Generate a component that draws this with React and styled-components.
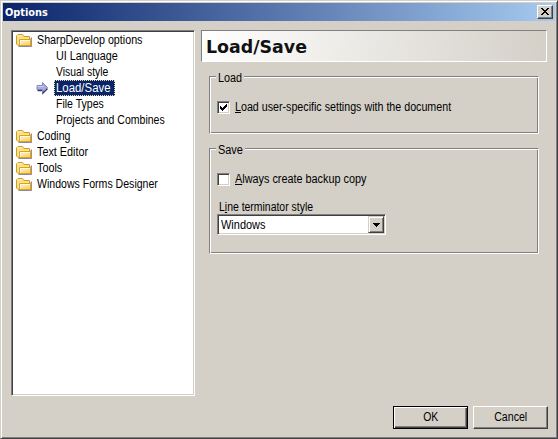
import React from "react";
import styled, { createGlobalStyle, css } from "styled-components";

const face = "#d4d0c8";
const shadow = "#808080";
const dark = "#404040";

const GlobalStyle = createGlobalStyle`
  *, *::before, *::after { box-sizing: border-box; }
  body { margin: 0; overflow: hidden; background: ${face}; }
  button { appearance: none; margin: 0; padding: 0; border-radius: 0; }
`;

const sunken = css`
  border: 1px solid;
  border-color: ${shadow} #fff #fff ${shadow};
  box-shadow: inset 1px 1px 0 ${dark}, inset -1px -1px 0 ${face};
`;

const raised = css`
  background: ${face};
  border: 1px solid;
  border-color: #fff ${dark} ${dark} #fff;
  box-shadow: inset -1px -1px 0 ${shadow};
`;

const Window = styled.main`
  width: 558px;
  height: 439px;
  padding: 2px 2px 1px 2px;
  background: ${face};
  border: 1px solid;
  border-color: ${face} ${dark} ${dark} ${face};
  box-shadow: inset 1px 1px 0 #fff, inset -1px -1px 0 ${shadow};
  font: 12px/16px "Liberation Sans", Arial, sans-serif;
  color: #000;
  display: flex;
  flex-direction: column;
`;

const TitleBar = styled.header`
  height: 18px;
  flex: none;
  display: flex;
  align-items: center;
  justify-content: space-between;
  padding: 0 2px;
  color: #fff;
  background: linear-gradient(90deg, #0a246a, #a6caf0);
  font: bold 11px/16px "DejaVu Sans", Verdana, sans-serif;
`;

const Title = styled.div`
  padding-top: 2px;
`;

const CloseButton = styled.button`
  ${raised}
  width: 16px;
  height: 14px;
  display: flex;
  align-items: center;
  justify-content: center;
  padding: 0 1px 1px 0;
`;

const Text = styled.span`
  display: inline-block;
  white-space: pre;
  transform: scaleX(${(p) => p.$fit || 0.88});
  transform-origin: ${(p) => p.$origin || "left"} center;
`;

const Body = styled.div`
  display: flex;
  gap: 6px;
  padding: 9px 0 0 8px;
`;

const Tree = styled.ul`
  ${sunken}
  list-style: none;
  margin: 0;
  padding: 1px;
  width: 184px;
  height: 366px;
  background: #fff;
`;

const TreeRow = styled.li`
  height: 16px;
  display: flex;
  padding-left: ${(p) => (p.$child ? 23 : 3)}px;
`;

const IconSlot = styled.span`
  width: ${(p) => (p.$child ? 18 : 19)}px;
  height: 16px;
  flex: none;
  display: flex;
`;

const RowLabel = styled.span`
  height: 16px;
  padding-left: 2px;
  white-space: nowrap;
  ${(p) =>
    p.$selected &&
    css`
      width: 61px;
      color: #fff;
      background: #0a246a;
      outline: 1px dotted #f5db95;
      outline-offset: -1px;
    `}
`;

const Panel = styled.section`
  width: 346px;
`;

const Heading = styled.h1`
  margin: 0 0 14px;
  height: 32px;
  padding: 0 0 0 4px;
  border: 1px solid;
  border-color: ${shadow} #fff #fff ${shadow};
  background: linear-gradient(97deg, #fff, ${face});
  font: bold 18.5px/32px "DejaVu Sans", Verdana, sans-serif;
  color: #111;
`;

const Group = styled.section`
  width: 330px;
  height: ${(p) => p.$height}px;
  margin: 0 0 14px 8px;
  border: 1px solid;
  border-color: ${shadow} #fff #fff ${shadow};
  box-shadow: inset 1px 1px 0 #fff, inset -1px -1px 0 ${shadow};
  display: flex;
  flex-direction: column;
`;

const GroupTitle = styled.div`
  height: 16px;
  width: ${(p) => p.$width}px;
  margin: -7px 0 0 6px;
  padding-left: 2px;
  background: ${face};
`;

const CheckRow = styled.label`
  display: flex;
  align-items: center;
  gap: 5px;
  height: 16px;
  margin: ${(p) => p.$top}px 0 0 7px;
  white-space: nowrap;
`;

const CheckBox = styled.span`
  ${sunken}
  width: 13px;
  height: 13px;
  flex: none;
  display: flex;
  background: #fff;
  padding: 2px;
`;

const FieldLabel = styled.div`
  margin: 12px 0 0 9px;
  height: 15px;
`;

const Select = styled.div`
  ${sunken}
  width: 169px;
  height: 21px;
  margin-left: 7px;
  padding: 1px;
  background: #fff;
  display: flex;
  justify-content: space-between;
`;

const SelectValue = styled.span`
  padding: 1px 0 0 2px;
`;

const DropButton = styled.button`
  background: ${face};
  border: 1px solid;
  border-color: ${face} ${dark} ${dark} ${face};
  box-shadow: inset 1px 1px 0 #fff, inset -1px -1px 0 ${shadow};
  width: 16px;
  height: 17px;
  display: flex;
  align-items: center;
  justify-content: center;
`;

const Footer = styled.footer`
  display: flex;
  justify-content: flex-end;
  gap: 5px;
  padding: 10px 7px 0 0;
`;

const PushButton = styled.button`
  width: 75px;
  height: 23px;
  font: inherit;
  color: #000;
  ${raised}
  padding-bottom: 1px;
  ${(p) =>
    p.$primary &&
    css`
      border-color: #000;
      box-shadow: inset 1px 1px 0 #fff, inset -1px -1px 0 ${dark}, inset -2px -2px 0 ${shadow};
    `}
`;

const Key = styled.u`
  text-decoration: underline;
  text-decoration-thickness: 1px;
  text-underline-offset: 1px;
  text-decoration-skip-ink: none;
`;

const FolderIcon = () => (
  <svg width="16" height="16" viewBox="0 0 16 16">
    <defs>
      <linearGradient id="folderFront" x1="0" y1="0" x2="0.5" y2="1">
        <stop offset="0" stopColor="#fff9cf" />
        <stop offset="1" stopColor="#f7d260" />
      </linearGradient>
    </defs>
    <path d="M2.5 14.5h13v-9" fill="none" stroke="#8c8aa0" />
    <path d="M.5 12V4L2 2.5h4.5L8 4.5h5.5V7H15v6.500H2z" fill="#fae08a" stroke="#cf9a2c" />
    <path d="M1.500 5V4l1-.5h3.500" fill="none" stroke="#fff0ad" />
    <path d="M3.500 13.500V7.500H14.500v6z" fill="url(#folderFront)" stroke="#d9a32f" />
    <path d="M4.500 12.500V8.500H14" fill="none" stroke="#fffbd7" />
  </svg>
);

const ArrowIcon = () => (
  <svg width="12" height="16" viewBox="-0.5 0 12 16">
    <path d="M1 10.500h5.500v2.500L11 8.500" fill="none" stroke="#333867" strokeWidth="1.500" />
    <path d="M.5 5.500H6V2.500L11 7.500 6 12V9.500H.5z" fill="#a7acdc" stroke="#8286bd" />
    <path d="M1 6.500h6" stroke="#ced2f1" />
  </svg>
);

const CloseIcon = () => (
  <svg width="8" height="7" viewBox="0 0 8 7" shapeRendering="crispEdges">
    <path
      d="M0 0h2v1H0zM6 0h2v1H6zM1 1h2v1H1zM5 1h2v1H5zM2 2h4v1H2zM3 3h2v1H3zM2 4h4v1H2zM1 5h2v1H1zM5 5h2v1H5zM0 6h2v1H0zM6 6h2v1H6z"
      fill="#000"
    />
  </svg>
);

const CheckIcon = () => (
  <svg width="7" height="7" viewBox="0 0 7 7" shapeRendering="crispEdges">
    <path d="M0 2h1v3H0zM1 3h1v3H1zM2 4h1v3H2zM3 3h1v3H3zM4 2h1v3H4zM5 1h1v3H5zM6 0h1v3H6z" fill="#000" />
  </svg>
);

const DropIcon = () => (
  <svg width="7" height="4" viewBox="0 0 7 4" shapeRendering="crispEdges">
    <path d="M0 0h7v1H0zM1 1h5v1H1zM2 2h3v1H2zM3 3h1v1H3z" fill="#000" />
  </svg>
);

const rows = [
  { label: "SharpDevelop options", fit: 0.893 },
  { label: "UI Language", fit: 0.9, child: true },
  { label: "Visual style", fit: 0.865, child: true },
  { label: "Load/Save", fit: 0.95, child: true, selected: true },
  { label: "File Types", fit: 0.877, child: true },
  { label: "Projects and Combines", fit: 0.876, child: true },
  { label: "Coding", fit: 0.878 },
  { label: "Text Editor", fit: 0.9 },
  { label: "Tools", fit: 0.9 },
  { label: "Windows Forms Designer", fit: 0.88 },
];

export default function App() {
  return (
    <>
      <GlobalStyle />
      <Window>
        <TitleBar>
          <Title>
            <Text $fit={0.89}>Options</Text>
          </Title>
          <CloseButton aria-label="Close">
            <CloseIcon />
          </CloseButton>
        </TitleBar>
        <Body>
          <Tree>
            {rows.map((row) => (
              <TreeRow key={row.label} $child={row.child}>
                <IconSlot $child={row.child}>
                  {!row.child && <FolderIcon />}
                  {row.selected && <ArrowIcon />}
                </IconSlot>
                <RowLabel $selected={row.selected}>
                  <Text $fit={row.fit}>{row.label}</Text>
                </RowLabel>
              </TreeRow>
            ))}
          </Tree>
          <Panel>
            <Heading>
              <Text $fit={0.94}>Load/Save</Text>
            </Heading>
            <Group $height={58}>
              <GroupTitle $width={28}>
                <Text $fit={0.9}>Load</Text>
              </GroupTitle>
              <CheckRow $top={13}>
                <CheckBox>
                  <CheckIcon />
                </CheckBox>
                <Text $fit={0.89}>
                  <Key>L</Key>oad user-specific settings with the document
                </Text>
              </CheckRow>
            </Group>
            <Group $height={106}>
              <GroupTitle $width={29}>
                <Text $fit={0.91}>Save</Text>
              </GroupTitle>
              <CheckRow $top={13}>
                <CheckBox />
                <Text $fit={0.904}>
                  <Key>A</Key>lways create backup copy
                </Text>
              </CheckRow>
              <FieldLabel>
                <Text $fit={0.87}>
                  L<Key>i</Key>ne terminator style
                </Text>
              </FieldLabel>
              <Select>
                <SelectValue>
                  <Text $fit={0.914}>Windows</Text>
                </SelectValue>
                <DropButton aria-label="Open list">
                  <DropIcon />
                </DropButton>
              </Select>
            </Group>
          </Panel>
        </Body>
        <Footer>
          <PushButton $primary>
            <Text $fit={0.87} $origin="center">OK</Text>
          </PushButton>
          <PushButton>
            <Text $fit={0.885} $origin="center">Cancel</Text>
          </PushButton>
        </Footer>
      </Window>
    </>
  );
}
